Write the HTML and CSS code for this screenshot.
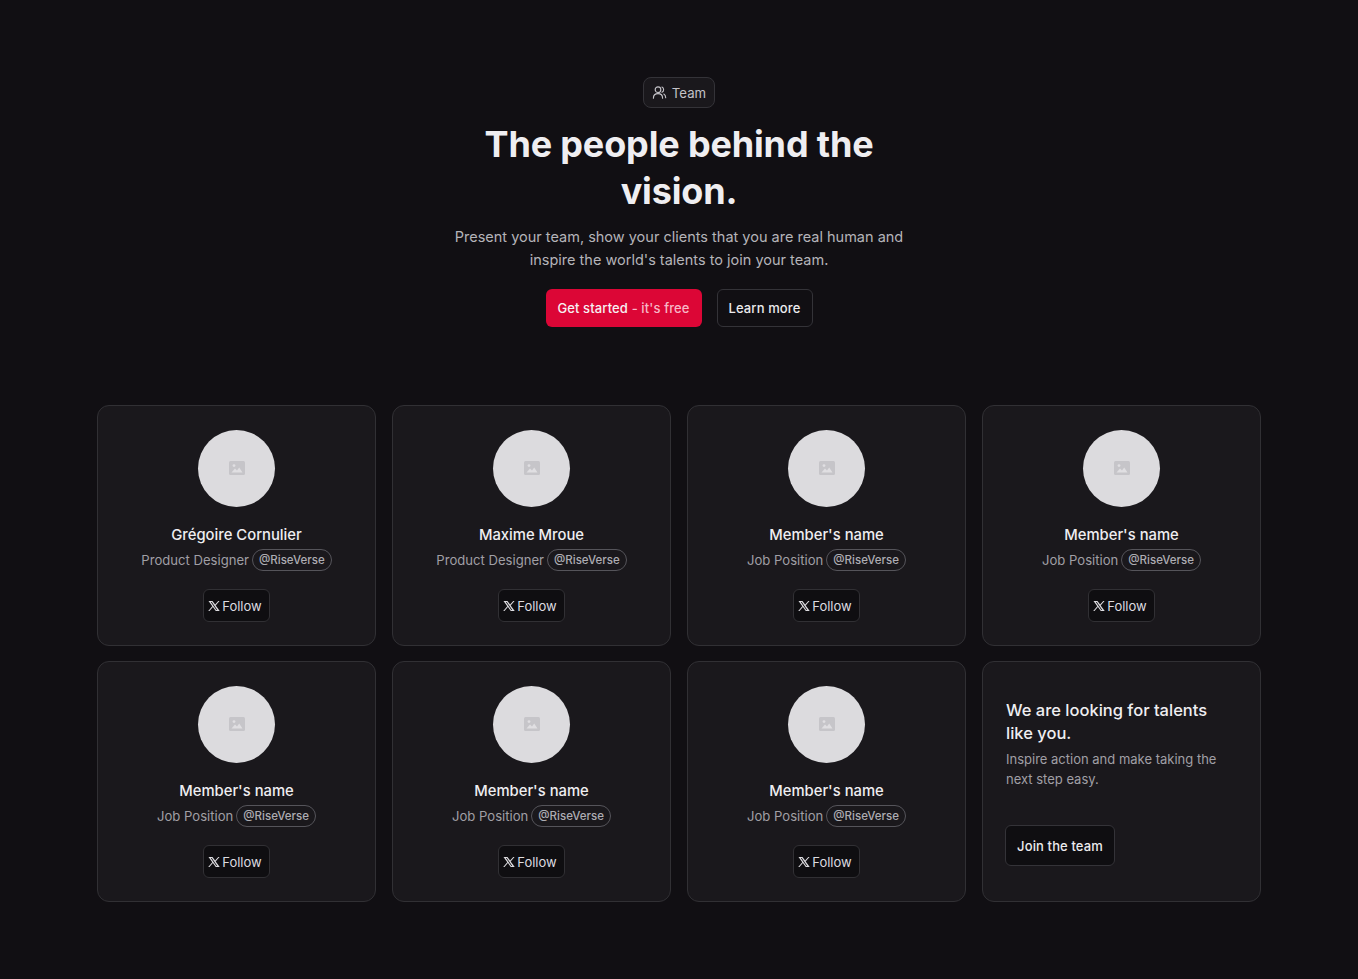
FILE: index.html
```html
<!DOCTYPE html>
<html lang="en">
<head>
    <meta charset="UTF-8">
    <meta name="viewport" content="width=device-width, initial-scale=1.0">
    <title>Team</title>
    <link rel="stylesheet" href="styles.css">
</head>
<body>
    <svg class="icon-defs" width="0" height="0" aria-hidden="true">
        <symbol id="icon-x" viewBox="0 0 24 24">
            <path fill-rule="evenodd" d="M1 2h8l5.200 7.200L20.500 2h2.600l-7.800 8.900L23.500 22h-8l-5.700-7.800L3 22H.4l8.200-9.400zm4.600 2 11 16h1.900L7.500 4z"/>
        </symbol>
        <symbol id="icon-image" viewBox="0 0 16 14">
            <rect width="16" height="14" rx="1.500" fill="#c6c5c9"/>
            <circle cx="5" cy="4.600" r="1.400" fill="#e0dfe2"/>
            <path d="M2.500 11.500 6 7.500l2 2 2.200-3 3.300 5z" fill="#e0dfe2"/>
        </symbol>
    </svg>

    <main class="page">
        <header class="hero">
            <span class="badge">
                <svg class="badge-icon" viewBox="0 0 16 16" fill="none" stroke="currentColor" stroke-width="1.2" stroke-linecap="round" stroke-linejoin="round">
                    <circle cx="6.400" cy="5" r="3"/>
                    <path d="M1.500 14c0-3 2-4.800 4.900-4.800s4.900 1.800 4.900 4.800"/>
                    <path d="M10.600 2.200a3 3 0 0 1 0 5.500"/>
                    <path d="M12.600 9.600c1.300.7 2 2.200 2 4"/>
                </svg>
                Team
            </span>
            <h1>The people behind the vision.</h1>
            <p class="lead">Present your team, show your clients that you are real human and inspire the world's talents to join your team.</p>
            <div class="actions">
                <a class="btn btn-primary" href="#">Get started <span class="btn-soft">- it's free</span></a>
                <a class="btn btn-dark" href="#">Learn more</a>
            </div>
        </header>

        <section class="team-grid">
            <article class="card">
                <div class="avatar"><svg class="avatar-icon"><use href="#icon-image"/></svg></div>
                <h3>Grégoire Cornulier</h3>
                <div class="role">Product Designer <span class="tag">@RiseVerse</span></div>
                <a class="follow" href="#"><svg class="x-icon"><use href="#icon-x"/></svg>Follow</a>
            </article>
            <article class="card">
                <div class="avatar"><svg class="avatar-icon"><use href="#icon-image"/></svg></div>
                <h3>Maxime Mroue</h3>
                <div class="role">Product Designer <span class="tag">@RiseVerse</span></div>
                <a class="follow" href="#"><svg class="x-icon"><use href="#icon-x"/></svg>Follow</a>
            </article>
            <article class="card">
                <div class="avatar"><svg class="avatar-icon"><use href="#icon-image"/></svg></div>
                <h3>Member's name</h3>
                <div class="role">Job Position <span class="tag">@RiseVerse</span></div>
                <a class="follow" href="#"><svg class="x-icon"><use href="#icon-x"/></svg>Follow</a>
            </article>
            <article class="card">
                <div class="avatar"><svg class="avatar-icon"><use href="#icon-image"/></svg></div>
                <h3>Member's name</h3>
                <div class="role">Job Position <span class="tag">@RiseVerse</span></div>
                <a class="follow" href="#"><svg class="x-icon"><use href="#icon-x"/></svg>Follow</a>
            </article>
            <article class="card">
                <div class="avatar"><svg class="avatar-icon"><use href="#icon-image"/></svg></div>
                <h3>Member's name</h3>
                <div class="role">Job Position <span class="tag">@RiseVerse</span></div>
                <a class="follow" href="#"><svg class="x-icon"><use href="#icon-x"/></svg>Follow</a>
            </article>
            <article class="card">
                <div class="avatar"><svg class="avatar-icon"><use href="#icon-image"/></svg></div>
                <h3>Member's name</h3>
                <div class="role">Job Position <span class="tag">@RiseVerse</span></div>
                <a class="follow" href="#"><svg class="x-icon"><use href="#icon-x"/></svg>Follow</a>
            </article>
            <article class="card">
                <div class="avatar"><svg class="avatar-icon"><use href="#icon-image"/></svg></div>
                <h3>Member's name</h3>
                <div class="role">Job Position <span class="tag">@RiseVerse</span></div>
                <a class="follow" href="#"><svg class="x-icon"><use href="#icon-x"/></svg>Follow</a>
            </article>
            <article class="card card-cta">
                <h3>We are looking for talents like you.</h3>
                <p>Inspire action and make taking the next step easy.</p>
                <a class="btn btn-dark btn-join" href="#">Join the team</a>
            </article>
        </section>
    </main>
</body>
</html>
```

FILE: styles.css
```css
* {
    box-sizing: border-box;
}

body {
    margin: 0;
    background-color: #110f13;
    color: #f0eff2;
    font-family: Inter, "Noto Sans", sans-serif;
}

a {
    text-decoration: none;
}

.icon-defs {
    display: block;
}

.page {
    width: 1164px;
    margin: 0 auto;
    padding: 77px 0 77px;
}

.hero {
    display: flex;
    flex-direction: column;
    align-items: center;
    text-align: center;
}

.badge {
    display: flex;
    align-items: center;
    gap: 5px;
    height: 31px;
    padding: 0 8px;
    background: #1a181c;
    border: 1px solid #343338;
    border-radius: 8px;
    font-size: 13.2px;
    color: #c4c3c8;
}

.badge-icon {
    width: 15px;
    height: 15px;
}

h1 {
    width: 440px;
    margin: 13px 0 0;
    font-size: 36px;
    line-height: 47px;
    font-weight: 700;
    letter-spacing: -0.15px;
    color: #efeef1;
}

.lead {
    width: 470px;
    margin: 10px 0 0;
    font-size: 14.5px;
    line-height: 23px;
    color: #b5b4b9;
}

.actions {
    display: flex;
    gap: 15px;
    margin-top: 18px;
}

.btn {
    display: flex;
    align-items: center;
    justify-content: center;
    height: 38px;
    border-radius: 6px;
    font-size: 13px;
    font-weight: 500;
    letter-spacing: 0.12px;
    white-space: nowrap;
}

.btn-primary {
    width: 156px;
    background: #dc0636;
    color: #f6f1f3;
    white-space: pre;
}

.btn-soft {
    color: #f7b7c6;
}

.btn-dark {
    width: 96px;
    background: #110f13;
    border: 1px solid #343338;
    color: #ecebee;
}

.team-grid {
    display: grid;
    grid-template-columns: repeat(4, 279px);
    column-gap: 16px;
    row-gap: 15px;
    margin-top: 78px;
}

.card {
    display: flex;
    flex-direction: column;
    align-items: center;
    height: 241px;
    padding-top: 24px;
    background: #1a181c;
    border: 1px solid #313034;
    border-radius: 12px;
}

.avatar {
    display: flex;
    align-items: center;
    justify-content: center;
    width: 77px;
    height: 77px;
    border-radius: 50%;
    background: #dcdbde;
}

.avatar-icon {
    width: 16px;
    height: 14px;
    margin-bottom: 1px;
}

.card h3 {
    margin: 17px 0 0;
    font-size: 14.8px;
    line-height: 23px;
    font-weight: 450;
    color: #efeef1;
}

.role {
    display: flex;
    align-items: center;
    gap: 3px;
    margin-top: 2px;
    font-size: 13.1px;
    color: #a09fa5;
}

.tag {
    padding: 0 6px;
    height: 22px;
    line-height: 20px;
    border: 1px solid #55545a;
    border-radius: 11px;
    font-size: 11.5px;
    font-weight: 500;
    color: #aeadb3;
}

.follow {
    display: flex;
    align-items: center;
    gap: 2px;
    height: 33px;
    margin-top: 18px;
    padding: 0 7px 0 4px;
    background: #0f0e11;
    border: 1px solid #313034;
    border-radius: 6px;
    font-size: 13px;
    color: #dddce0;
}

.x-icon {
    width: 12px;
    height: 12px;
    fill: #dddce0;
}

.card-cta {
    align-items: flex-start;
    padding: 37px 23px 0;
}

.card-cta h3 {
    margin: 0;
    font-size: 16.5px;
    line-height: 23px;
}

.card-cta p {
    margin: 4px 0 0;
    font-size: 13px;
    line-height: 20px;
    color: #a09fa5;
}

.btn-join {
    width: 110px;
    height: 41px;
    margin-top: 36px;
    margin-left: -1px;
    background: #0f0e11;
}
```
